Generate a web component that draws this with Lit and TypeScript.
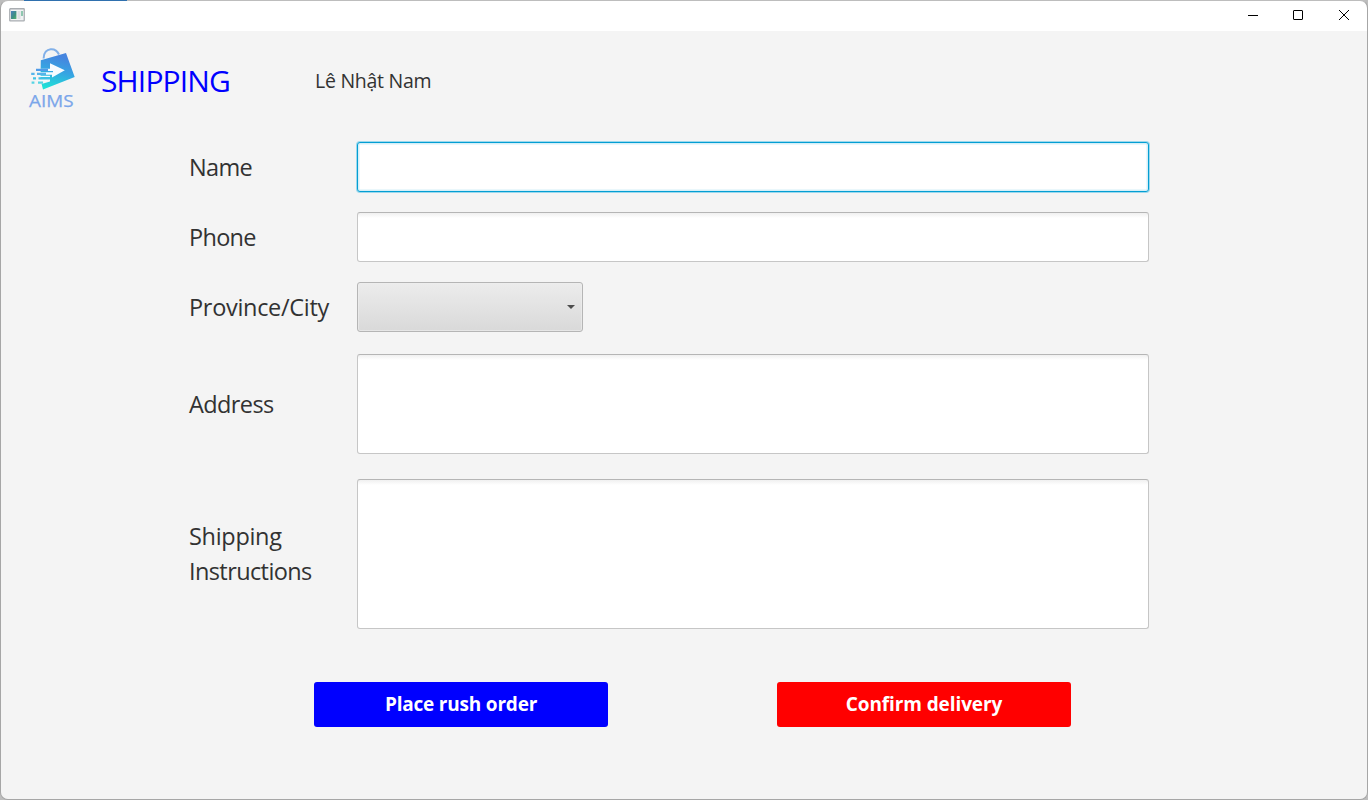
import { LitElement, html, css, svg } from "lit";
import { customElement } from "lit/decorators.js";

@customElement("app-logo")
class AppLogo extends LitElement {
  static styles = css`
    :host { display: block; width: 52px; height: 68px; }
    svg { display: block; }
    .word { font-family: "Open Sans", "Noto Sans", sans-serif; font-size: 17px; fill: #7ba6ea; stroke: #7ba6ea; stroke-width: 0.25; }
  `;
  render() {
    return html`<svg width="52" height="68" viewBox="27 47 52 68">
      <defs>
        <linearGradient id="bag" x1="0.6" y1="0" x2="0.35" y2="1">
          <stop offset="0.1" stop-color="#4685df" />
          <stop offset="0.5" stop-color="#36a5e2" />
          <stop offset="1" stop-color="#1fe2d7" />
        </linearGradient>
      </defs>
      <path d="M43.6 58.5C43.6 52.5 47 49.6 50.6 49.2C54.8 48.8 57.4 51 59 54.5" fill="none" stroke="#82b0e8" stroke-width="2" />
      <path d="M40.8 60.2L66 53L74.7 77L43 89.6L41.6 84L50 81.5V78H40.5Z" fill="url(#bag)" />
      <path d="M50 63.2L64.8 70.2L52 77.5V74.8H40V72.2H53V71H40V68.8H50Z" fill="#f7fbff" />
      <path d="M40 76.3H50M38 80.7H47" stroke="#f4fbff" stroke-width="1.3" />
      <g fill="none" stroke-width="2.2">
        <path d="M36 69.8H48" stroke="#509be8" />
        <path d="M31.2 73.9H34.6M37 73.9H46" stroke="#55b4ea" />
        <path d="M33 78.4H36M38.5 78.4H50" stroke="#42c2e5" />
        <path d="M31.6 82.6H34.4M38 82.6H43" stroke="#55d4e4" />
      </g>
      ${svg`<text class="word" x="29" y="107" textLength="44.5" lengthAdjust="spacingAndGlyphs">AIMS</text>`}
    </svg>`;
  }
}

@customElement("window-bar")
class WindowBar extends LitElement {
  static styles = css`
    :host { display: flex; height: 30px; background: #fff; justify-content: space-between; }
    svg { display: block; }
    .app { margin: 7px 0 0 8px; }
    .controls { display: flex; margin-right: 0.5px; }
    .control { width: 45.5px; height: 28px; display: grid; place-items: center; }
  `;
  render() {
    return html`
      <svg class="app" width="16" height="14" viewBox="0 0 16 14">
        <defs>
          <linearGradient id="pane" x1="0" y1="0" x2="1" y2="1">
            <stop offset="0" stop-color="#4a7fc0" /><stop offset="0.6" stop-color="#3d917f" /><stop offset="1" stop-color="#58b470" />
          </linearGradient>
        </defs>
        <rect x="0.75" y="0.75" width="14.5" height="12.2" rx="0.6" fill="#f2f3f4" stroke="#a9adb1" stroke-width="1.3" />
        <rect x="2" y="3" width="5.4" height="8" fill="url(#pane)" />
        <rect x="8.5" y="3" width="3" height="8" fill="#dcdfe2" />
        <rect x="12" y="3" width="2" height="5" fill="#8fc7b0" />
      </svg>
      <div class="controls">
        <div class="control"><svg width="12" height="12"><path d="M1 6.5H11" stroke="#000" /></svg></div>
        <div class="control"><svg width="12" height="12"><rect x="1.5" y="1.5" width="9" height="9" rx="0.5" fill="none" stroke="#000" /></svg></div>
        <div class="control"><svg width="12" height="12"><path d="M1 1L11 11M11 1L1 11" stroke="#000" stroke-width="1" /></svg></div>
      </div>`;
  }
}

@customElement("app-root")
class AppRoot extends LitElement {
  static styles = css`
    :host { display: block; width: 1368px; height: 800px; background: linear-gradient(90deg, #bdbdbd 24px, #2f70ae 24px, #2f70ae 127px, #bdbdbd 127px); font-family: "Open Sans", "Noto Sans", sans-serif; color: #323232; overflow: hidden; }
    * { box-sizing: border-box; }
    .window { width: 1368px; height: 800px; border: 1px solid #a6a6a6; border-top-color: transparent; border-radius: 8px; overflow: hidden; }
    .body { height: 768px; background: #f4f4f4; }
    .header { display: flex; height: 111px; padding: 16px 0 0 26px; }
    .title { width: 214px; margin: 12px 0 0 22px; color: #00f; font-size: 30px; line-height: 44px; letter-spacing: -0.85px; }
    .user { margin-top: 19px; font-size: 19.5px; line-height: 30px; letter-spacing: -0.27px; }
    .form { display: grid; grid-template-columns: 168px 792px; grid-template-rows: 50px 50px 50px 100px 150px; margin-left: 188px; row-gap: 20px; }
    .label { align-self: center; font-size: 23.5px; line-height: 35px; padding-top: 1px; }
    .notes.label { padding-top: 0; }
    .name { letter-spacing: -0.65px; }
    .phone { letter-spacing: -0.7px; }
    .city { letter-spacing: -0.3px; }
    .street { letter-spacing: -0.6px; }
    .shipping { letter-spacing: -0.3px; }
    .instructions { letter-spacing: -0.6px; }
    .field { border: 1px solid #c6c6c6; border-top-color: #b5b5b5; border-radius: 3px; background: linear-gradient(#f0f0f0, #fff 5px); }
    .focused { border-color: #039ed3; background: #fff; box-shadow: 0 0 0 1px #9dd8ec, inset 0 0 0 1.5px #d5eff8; }
    .select { width: 226px; border: 1px solid #b5b5b5; border-radius: 3px; background: linear-gradient(#ececec, #d9d9d9); box-shadow: inset 0 0 0 1px #eeeeee99; display: flex; align-items: center; justify-content: flex-end; padding-right: 7px; }
    .address { margin-top: 2px; margin-bottom: -2px; }
    .notes { margin-top: 7px; margin-bottom: -7px; }
    .actions { display: flex; gap: 169px; margin: 60px 0 0 313px; }
    .action { width: 294px; height: 45px; border: 0; border-radius: 3px; color: #fff; font: 700 19px/44px "Open Sans", "Noto Sans", sans-serif; padding: 0 0 2px; text-align: center; }
    .rush { background: #00f; letter-spacing: -0.2px; }
    .confirm { background: #f00; letter-spacing: -0.1px; }
  `;
  render() {
    return html`<div class="window">
      <window-bar></window-bar>
      <div class="body">
        <div class="header">
          <app-logo></app-logo>
          <div class="title">SHIPPING</div>
          <div class="user">Lê Nhật Nam</div>
        </div>
        <div class="form">
          <div class="label name">Name</div><div class="field focused"></div>
          <div class="label phone">Phone</div><div class="field"></div>
          <div class="label city">Province/City</div>
          <div class="select"><svg width="8" height="4"><path d="M0 0H8L4 4Z" fill="#4d4d4d" /></svg></div>
          <div class="label street address">Address</div><div class="field address"></div>
          <div class="label notes"><div class="shipping">Shipping</div><div class="instructions">Instructions</div></div><div class="field notes"></div>
        </div>
        <div class="actions">
          <button class="action rush">Place rush order</button>
          <button class="action confirm">Confirm delivery</button>
        </div>
      </div>
    </div>`;
  }
}
